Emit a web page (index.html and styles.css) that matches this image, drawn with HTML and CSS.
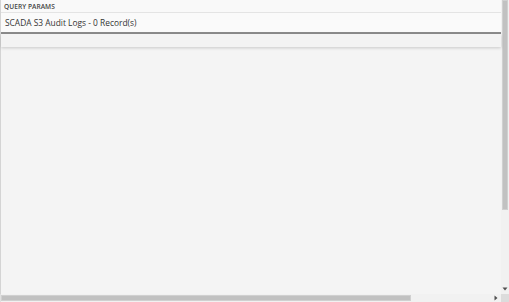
FILE: index.html
```html
<!DOCTYPE html>
<html>
<head>
<meta charset="utf-8">
<link rel="stylesheet" href="styles.css">
</head>
<body>
<div class="app">
  <div class="main">
    <div class="params">QUERY PARAMS</div>
    <div class="title">SCADA S3 Audit Logs - 0 Record(s)</div>
    <div class="toolbar"></div>
    <div class="content"></div>
  </div>
  <div class="vscroll">
    <div class="vthumb"></div>
    <div class="vtrack"></div>
    <div class="vbtn"><svg width="8" height="6" viewBox="0 0 8 6"><path d="M1.5 1.5h5L4 4.5z" fill="#505050"/></svg></div>
  </div>
  <div class="hscroll">
    <div class="hthumb"></div>
    <div class="htrack"></div>
    <div class="hbtn"><svg width="6" height="8" viewBox="0 0 6 8"><path d="M1.5 1.5v5L4.5 4z" fill="#505050"/></svg></div>
  </div>
  <div class="corner"></div>
</div>
</body>
</html>
```
FILE: styles.css
```css
html, body {
  margin: 0;
  padding: 0;
  width: 509px;
  height: 302px;
  overflow: hidden;
  background: #f4f4f4;
  font-family: "Open Sans", "Noto Sans", sans-serif;
}
.app {
  display: grid;
  grid-template-columns: 501px 8px;
  grid-template-rows: 294px 8px;
  width: 509px;
  height: 302px;
}
.main {
  display: flex;
  flex-direction: column;
  background: #f4f4f4;
  border-left: 1px solid #d4d4d4;
  min-height: 0;
}
.params {
  height: 12px;
  line-height: 13px;
  padding-left: 3px;
  font-size: 6.6px;
  font-weight: 600;
  color: #444;
  background: #f9f9f9;
  border-bottom: 1px solid #e4e4e4;
  letter-spacing: 0.05px;
}
.title {
  height: 19px;
  line-height: 19px;
  padding-left: 4px;
  font-size: 8.4px;
  color: #333;
  background: #fafafa;
  border-bottom: 2px solid #8c8c8c;
}
.toolbar {
  height: 13px;
  background: #f3f3f3;
  box-shadow: 0 1px 3px rgba(0,0,0,0.18);
  position: relative;
  z-index: 1;
}
.content {
  flex: 1;
  background: #f4f4f4;
}
.vscroll {
  display: flex;
  flex-direction: column;
  background: #f1f1f1;
}
.vthumb {
  height: 210px;
  margin: 0 1px 0 1px;
  background: #c1c1c1;
  border: 1px solid #d0d0d0;
  box-sizing: border-box;
}
.vtrack { flex: 1; }
.vbtn {
  height: 10px;
  display: flex;
  align-items: center;
  justify-content: center;
}
.hscroll {
  display: flex;
  background: #f1f1f1;
  border-left: 1px solid #e0e0e0;
}
.hthumb {
  width: 410px;
  margin: 1px 0;
  background: #c1c1c1;
  border: 1px solid #d0d0d0;
  box-sizing: border-box;
}
.htrack { flex: 1; }
.hbtn {
  width: 10px;
  display: flex;
  align-items: center;
  justify-content: center;
}
.corner {
  background: #dcdcdc;
}
```
